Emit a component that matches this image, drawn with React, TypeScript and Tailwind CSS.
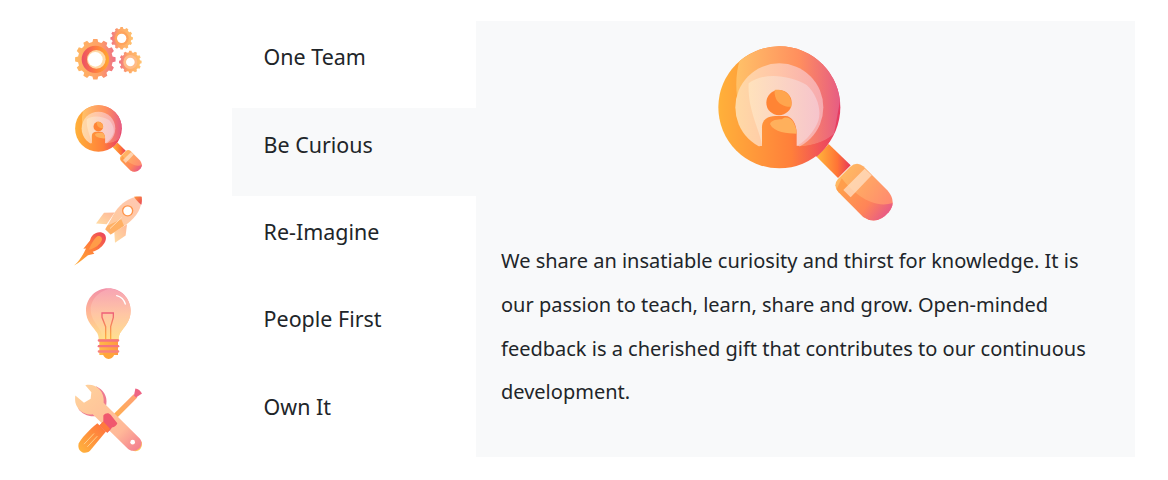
const values = [
  { name: "One Team", icon: <Gears /> },
  { name: "Be Curious", icon: <Magnifier id="small" viewBox="-63.6 71.5 784 686" className="h-[87.5px] w-[100px] overflow-visible" />, active: true },
  { name: "Re-Imagine", icon: <Rocket /> },
  { name: "People First", icon: <Bulb /> },
  { name: "Own It", icon: <Tools /> },
];

function gearPath(cx: number, cy: number, r: number, teeth: number) {
  const inner = r * 0.86;
  const step = (Math.PI * 2) / teeth;
  const pts: string[] = [];
  for (let i = 0; i < teeth; i++) {
    const a = i * step;
    const pt = (rad: number, t: number) =>
      `${(cx + rad * Math.cos(a + t * step)).toFixed(1)} ${(cy + rad * Math.sin(a + t * step)).toFixed(1)}`;
    pts.push(pt(inner, -0.32), pt(r, -0.2), pt(r, 0.2), pt(inner, 0.32));
  }
  return `M${pts.join("L")}Z`;
}

function Gears() {
  return (
    <svg viewBox="0 18 300 262.5" className="h-[87.5px] w-[100px] overflow-visible">
      <defs>
        <linearGradient id="g-outer" x1="0" x2="1" y1="0" y2="0">
          <stop offset="0" stopColor="#ffb964" />
          <stop offset="0.6" stopColor="#ffa066" />
          <stop offset="1" stopColor="#ee7086" />
        </linearGradient>
        <linearGradient id="g-outer2" x1="0" x2="1" y1="0" y2="0">
          <stop offset="0" stopColor="#ee7086" />
          <stop offset="0.4" stopColor="#ffa866" />
          <stop offset="1" stopColor="#ffc270" />
        </linearGradient>
        <linearGradient id="g-ring" x1="0" x2="1" y1="0" y2="0">
          <stop offset="0" stopColor="#ec4f66" />
          <stop offset="0.55" stopColor="#ff7f3f" />
          <stop offset="1" stopColor="#ffa930" />
        </linearGradient>
      </defs>
      <path d={gearPath(106, 133, 61, 12)} fill="url(#g-outer)" />
      <circle cx="106" cy="133" r="41" fill="url(#g-ring)" />
      <circle cx="109" cy="133" r="28" fill="#ffd8a6" />
      <circle cx="106" cy="133" r="22" fill="#fff" />
      <path d={gearPath(185, 70, 34, 12)} fill="url(#g-outer2)" />
      <circle cx="185" cy="70" r="21" fill="#ffa45e" />
      <circle cx="185" cy="70" r="14" fill="#fff" />
      <path d={gearPath(211, 141, 34, 12)} fill="url(#g-outer2)" />
      <circle cx="211" cy="141" r="21" fill="#ffbc8a" />
      <circle cx="211" cy="141" r="13" fill="#fff" />
    </svg>
  );
}

function Magnifier({ id, viewBox, className }: { id: string; viewBox: string; className: string }) {
  const grip = "M414 447L450 411Q470 393 490 409L562 481Q592 515 566 547Q530 588 490 561L416 487Q397 466 414 447Z";
  return (
    <svg viewBox={viewBox} className={className}>
      <defs>
        <linearGradient id={`${id}-base`} gradientUnits="userSpaceOnUse" x1="55" x2="421" y1="0" y2="0">
          <stop offset="0" stopColor="#ffb13a" />
          <stop offset="0.6" stopColor="#ff7f3a" />
          <stop offset="0.85" stopColor="#f0505a" />
          <stop offset="1" stopColor="#e53a62" />
        </linearGradient>
        <linearGradient id={`${id}-over`} gradientUnits="userSpaceOnUse" x1="110" x2="421" y1="0" y2="0">
          <stop offset="0" stopColor="#ffc168" />
          <stop offset="0.6" stopColor="#ff8f5e" />
          <stop offset="1" stopColor="#e65c84" />
        </linearGradient>
        <linearGradient id={`${id}-lens`} gradientUnits="userSpaceOnUse" x1="106" x2="370" y1="0" y2="0">
          <stop offset="0" stopColor="#ffdaa6" />
          <stop offset="0.5" stopColor="#ffc4a8" />
          <stop offset="1" stopColor="#f6aab0" />
        </linearGradient>
        <linearGradient id={`${id}-glare`} gradientUnits="userSpaceOnUse" x1="146" x2="358" y1="0" y2="0">
          <stop offset="0" stopColor="#ffe2bc" />
          <stop offset="1" stopColor="#f6c4cc" />
        </linearGradient>
        <linearGradient id={`${id}-neck`} gradientUnits="userSpaceOnUse" x1="355" x2="450" y1="400" y2="400">
          <stop offset="0" stopColor="#ffb13a" />
          <stop offset="0.6" stopColor="#ff7436" />
          <stop offset="1" stopColor="#e83a58" />
        </linearGradient>
        <linearGradient id={`${id}-grip`} gradientUnits="userSpaceOnUse" x1="410" x2="570" y1="420" y2="520">
          <stop offset="0" stopColor="#ffbe62" />
          <stop offset="0.6" stopColor="#ffa066" />
          <stop offset="1" stopColor="#ff8a70" />
        </linearGradient>
        <linearGradient id={`${id}-grip2`} gradientUnits="userSpaceOnUse" x1="430" x2="560" y1="470" y2="570">
          <stop offset="0" stopColor="#ff9e4c" />
          <stop offset="0.55" stopColor="#ff8458" />
          <stop offset="1" stopColor="#e4558c" />
        </linearGradient>
        <clipPath id={`${id}-circle`}>
          <circle cx="238" cy="232" r="183" />
        </clipPath>
        <clipPath id={`${id}-gripclip`}>
          <path d={grip} />
        </clipPath>
      </defs>
      <path d="M350 380L386 342L452 406L414 444Z" fill={`url(#${id}-neck)`} />
      <circle cx="238" cy="232" r="183" fill={`url(#${id}-base)`} />
      <g clipPath={`url(#${id}-circle)`}>
        <path d="M120 88C100 150 105 240 150 300C190 350 330 375 402 312L440 100L250 20Z" fill={`url(#${id}-over)`} />
      </g>
      <circle cx="238" cy="232" r="132" fill={`url(#${id}-lens)`} />
      <path d="M146 160C190 125 270 135 320 165C352 195 365 240 355 272C345 300 320 330 295 345L186 345C180 310 160 270 150 220C146 195 145 175 146 160Z" fill={`url(#${id}-glare)`} />
      <path d="M186 350V292C186 268 204 258 226 258H256C276 258 290 282 290 310V352L238 372Z" fill={`url(#${id}-base)`} />
      <path d="M178 348H298L296 372H180Z" fill={`url(#${id}-base)`} />
      <path d="M296 350C330 348 370 338 398 315C385 345 368 365 350 380C335 368 315 358 296 350Z" fill={`url(#${id}-base)`} />
      <path d="M210 282C214 270 232 268 246 268C254 258 274 262 282 280C288 292 290 302 290 311C262 310 222 308 210 282Z" fill="#ffb05c" />
      <circle cx="237" cy="218" r="38" fill="#ff8434" />
      <path d="M224 180C232 178 255 178 268 198C274 210 275 220 274 230C255 232 235 222 228 206C224 196 223 188 224 180Z" fill="#ffa54e" />
      <path d={grip} fill={`url(#${id}-grip)`} />
      <g clipPath={`url(#${id}-gripclip)`}>
        <path d="M425 445C460 490 520 540 582 518L590 600L470 600L400 500Z" fill={`url(#${id}-grip2)`} />
        <path d="M494 416L515 436L452 502L430 480Z" fill="#ffe4cc" opacity="0.7" />
      </g>
    </svg>
  );
}

function Rocket() {
  return (
    <svg viewBox="0 22.5 300 262.5" className="h-[87.5px] w-[100px] overflow-visible">
      <defs>
        <linearGradient id="r-body" x1="0" x2="1" y1="1" y2="0">
          <stop offset="0" stopColor="#ffca96" />
          <stop offset="1" stopColor="#ffc8b4" />
        </linearGradient>
        <linearGradient id="r-fin" x1="0" x2="1" y1="1" y2="0">
          <stop offset="0" stopColor="#ffdca4" />
          <stop offset="1" stopColor="#ffb898" />
        </linearGradient>
        <linearGradient id="r-flame" x1="0" x2="1" y1="1" y2="0">
          <stop offset="0" stopColor="#ffb13a" />
          <stop offset="0.55" stopColor="#ff7d3a" />
          <stop offset="1" stopColor="#ea3f5e" />
        </linearGradient>
        <linearGradient id="r-nose" x1="0" x2="1" y1="0" y2="1">
          <stop offset="0" stopColor="#ff9838" />
          <stop offset="1" stopColor="#e8455a" />
        </linearGradient>
      </defs>
      <path d="M42 231C62 214 70 196 78 180L70 181L90 156C94 140 104 132 118 131C136 131 141 145 136 158C130 172 116 184 98 190L103 196L84 200C72 210 58 222 42 231Z" fill="url(#r-flame)" />
      <path d="M86 184C92 170 100 152 112 143C122 140 128 148 125 156C120 168 106 180 86 184Z" fill="#ff9c48" />
      <path d="M164 72L132 73L108 105L140 107Z" fill="url(#r-fin)" />
      <path d="M201 107L197 141L165 163L163 130Z" fill="url(#r-fin)" />
      <path d="M245 25C215 22 184 40 164 72L136 122L152 138L202 106C230 84 247 58 245 25Z" fill="url(#r-body)" />
      <path d="M136 122L142 112L184 92L192 112L152 138Z" fill="#ffb064" />
      <path d="M150 120L186 86" stroke="#ffdcb8" strokeWidth="3" />
      <path d="M222 25C232 24 240 24 245 25C246 33 246 41 244 49C235 42 228 34 222 25Z" fill="url(#r-nose)" />
      <circle cx="203" cy="67" r="17" fill="#ff9348" />
      <circle cx="203" cy="67" r="13" fill="#fff" />
    </svg>
  );
}

function Bulb() {
  return (
    <svg viewBox="0 9 300 262.5" className="h-[87.5px] w-[100px] overflow-visible">
      <defs>
        <linearGradient id="b-glass" x1="0" x2="0" y1="0" y2="1">
          <stop offset="0" stopColor="#f291a8" />
          <stop offset="0.45" stopColor="#ffb596" />
          <stop offset="1" stopColor="#ffe08a" />
        </linearGradient>
        <linearGradient id="b-light" x1="0" x2="0" y1="0" y2="1">
          <stop offset="0" stopColor="#f7a4b4" />
          <stop offset="0.5" stopColor="#ffc6a4" />
          <stop offset="1" stopColor="#ffe08e" />
        </linearGradient>
        <linearGradient id="b-base" x1="0" x2="1" y1="0" y2="0">
          <stop offset="0" stopColor="#ffb94a" />
          <stop offset="1" stopColor="#ff9840" />
        </linearGradient>
        <linearGradient id="b-wire" x1="0" x2="0" y1="0" y2="1">
          <stop offset="0" stopColor="#ee5f78" />
          <stop offset="1" stopColor="#ffb13a" />
        </linearGradient>
      </defs>
      <path d="M145 25C107 25 78 55 78 92C78 125 100 140 112 160C116 168 116 175 116 180H176C176 175 176 168 180 160C192 140 212 125 212 92C212 55 183 25 145 25Z" fill="url(#b-glass)" />
      <path d="M152 26C185 30 212 58 212 92C212 125 192 140 180 160C176 168 176 175 176 180H128C128 170 126 162 120 150C108 130 92 115 92 88C92 58 120 30 152 26Z" fill="url(#b-light)" />
      <path d="M170 47C182 50 192 59 196 72" fill="none" stroke="#fff" strokeWidth="4" strokeLinecap="round" />
      <path d="M124 99H162M126 99L126 112L137 140V178M160 99L160 112L152 140V178" fill="none" stroke="url(#b-wire)" strokeWidth="4" />
      <rect x="118" y="178" width="56" height="47" fill="url(#b-base)" />
      <rect x="113" y="178" width="65" height="7" rx="3.5" fill="#f5747e" />
      <rect x="113" y="195" width="65" height="7" rx="3.5" fill="#f5747e" />
      <rect x="113" y="211" width="65" height="7" rx="3.5" fill="#f8827c" />
      <path d="M128 220H164C162 230 155 237 146 237C137 237 130 230 128 220Z" fill="#ffa53a" />
    </svg>
  );
}

function Tools() {
  return (
    <svg viewBox="0 -13.5 300 262.5" className="h-[87.5px] w-[100px] overflow-visible">
      <defs>
        <linearGradient id="t-wrench" x1="0" x2="1" y1="0" y2="1">
          <stop offset="0" stopColor="#ffd49c" />
          <stop offset="0.7" stopColor="#ffb898" />
          <stop offset="1" stopColor="#f2788e" />
        </linearGradient>
        <linearGradient id="t-driver" x1="0" x2="1" y1="1" y2="0">
          <stop offset="0" stopColor="#ffb63e" />
          <stop offset="1" stopColor="#ff6f3c" />
        </linearGradient>
        <linearGradient id="t-shaft" x1="0" x2="1" y1="1" y2="0">
          <stop offset="0" stopColor="#ffb04c" />
          <stop offset="1" stopColor="#ffa078" />
        </linearGradient>
      </defs>
      <path d="M218 226C234 232 250 218 245 198L225 205Z" fill="#ffc65a" />
      <path d="M108 32C130 42 143 62 139 86C138 94 134 100 130 104L122 84Z" fill="#ee7a90" />
      <path d="M54 98C66 116 86 124 106 122L98 112Z" fill="#ee7a90" />
      <path d="M159 118L221 56L232 66L170 128Z" fill="url(#t-shaft)" />
      <path d="M222 60L226 39C234 40 242 46 246 54L228 66Z" fill="#ee6484" />
      <path d="M76 29C105 22 135 45 131 82L240 190C252 205 240 226 220 226C212 226 206 222 202 218L98 116C75 120 52 105 46 80C45 72 45 66 46 60L72 82L92 70L94 50Z" fill="url(#t-wrench)" />
      <circle cx="218" cy="200" r="7" fill="#fff" />
      <path d="M112 143L138 168L90 226C74 240 50 228 56 204C62 190 85 165 112 143Z" fill="url(#t-driver)" />
      <path d="M130 120C136 112 146 110 152 118L172 143C170 150 164 154 156 156L150 164L142 172L118 150L130 138Z" fill="#f0586e" />
      <path d="M118 150L130 138L150 160L142 172Z" fill="#ff7a3c" />
      <path d="M72 206L102 174M82 214L112 182" stroke="#ffd08a" strokeWidth="3" />
    </svg>
  );
}

export default function App() {
  return (
    <div className="min-h-screen bg-white font-['Noto_Sans',sans-serif] text-[#212529]">
      <div className="flex pt-[21px] pr-[33px]">
        <div className="w-[476px] shrink-0">
          {values.map((v) => (
            <div key={v.name} className="flex h-[87.4px] items-stretch">
              <div className="w-[232px] shrink-0 pl-[60px]">{v.icon}</div>
              <div className={`flex flex-1 items-center pb-[15px] pl-[31.6px] text-[21.44px] ${v.active ? "bg-[#f8f9fa]" : ""}`}>
                {v.name}
              </div>
            </div>
          ))}
        </div>
        <div className="h-[436px] flex-1 bg-[#f8f9fa] px-[25px] pt-[25px]">
          <div className="flex justify-center">
            <Magnifier id="large" viewBox="54 48 525 525" className="h-[175px] w-[175px]" />
          </div>
          <p className="mt-[18px] text-[20px] leading-[43.75px]">
            We share an insatiable curiosity and thirst for knowledge. It is our passion to teach, learn, share and
            grow. Open-minded feedback is a cherished gift that contributes to our continuous development.
          </p>
        </div>
      </div>
    </div>
  );
}
